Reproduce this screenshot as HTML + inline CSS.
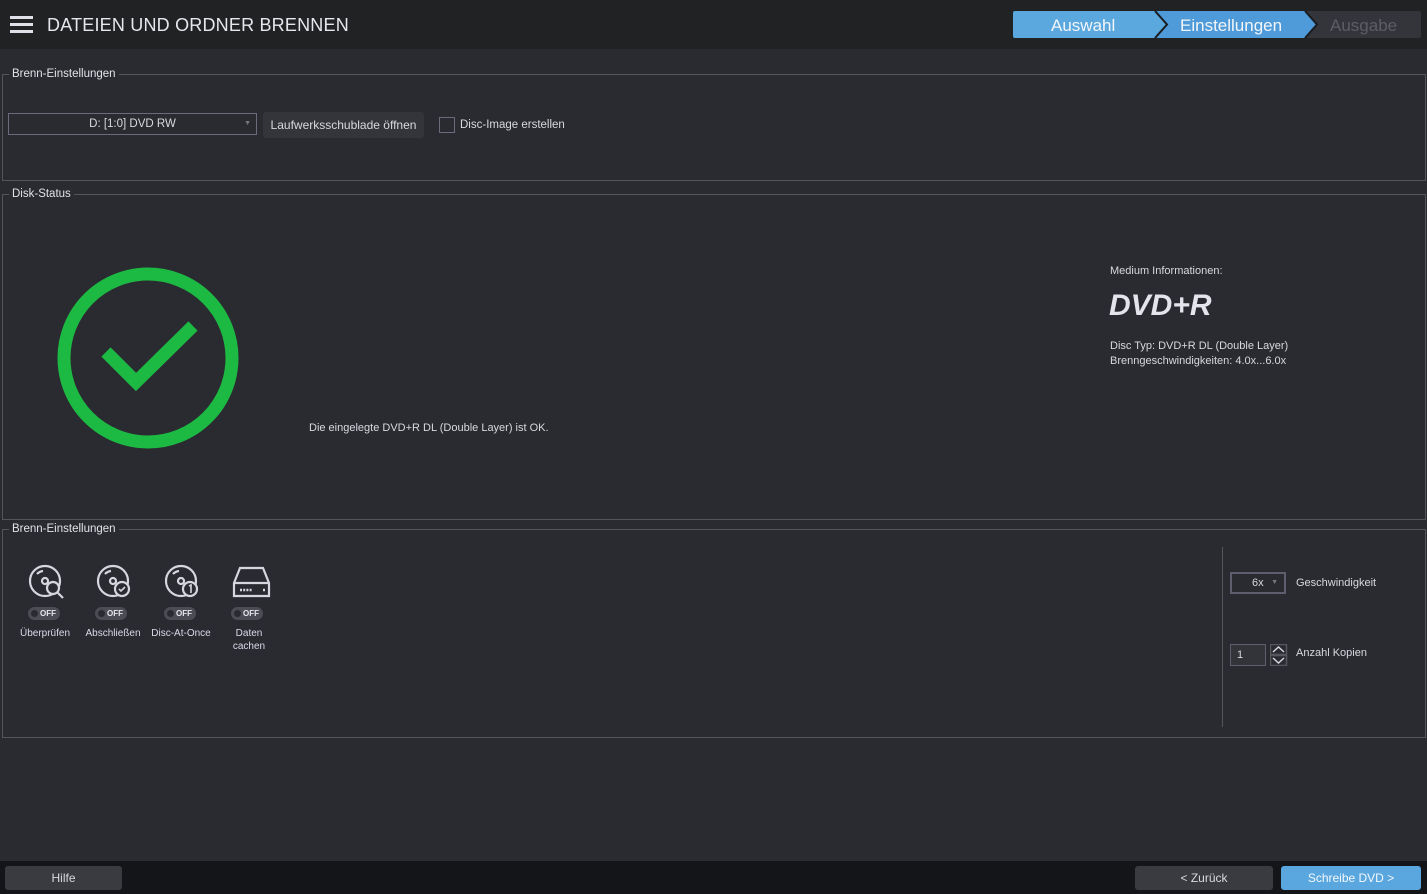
<!DOCTYPE html>
<html><head><meta charset="utf-8">
<style>
*{box-sizing:border-box;margin:0;padding:0}
body{width:1427px;height:894px;background:#2a2b31;font-family:"Liberation Sans",sans-serif;color:#d8d8de;position:relative;overflow:hidden;font-size:12px}
.hdr{position:absolute;left:0;top:0;width:1427px;height:49px;background:#212224}
.ham{position:absolute;left:10px;width:23px;height:3px;background:#e0e0ea}
.title{position:absolute;left:47px;top:15px;font-size:18px;color:#e6e6ee;letter-spacing:0.2px}
.box{position:absolute;left:2px;width:1424px;border:1px solid #54555b}
.lg{position:absolute;left:6px;top:-7px;background:#2a2b31;padding:0 3px;font-size:11.5px;color:#e2e2e8}
.t{position:absolute;white-space:nowrap}
.btn{position:absolute;border-radius:3px;text-align:center;font-size:12px}
.tog{position:absolute;width:32px;height:13px;border-radius:7px;background:#4b4c54;font-size:8px;font-weight:bold;color:#e6e6ee;line-height:13px;padding-left:12px;white-space:nowrap}
.tog:before{content:"";position:absolute;left:3px;top:3px;width:7px;height:7px;border-radius:50%;background:#2a2b31}
.lbl{position:absolute;font-size:10px;color:#d8dae8;text-align:center;width:70px;line-height:13px}
</style></head><body>
<div class="hdr">
 <div class="ham" style="top:16px"></div><div class="ham" style="top:23px"></div><div class="ham" style="top:30px"></div>
 <div class="title">DATEIEN UND ORDNER BRENNEN</div>
 <svg style="position:absolute;left:1013px;top:11px" width="408" height="27">
  <path d="M0 2 Q0 0 2 0 H142 L154 13.5 L142 27 H2 Q0 27 0 25Z" fill="#5aa8de"/>
  <path d="M143 0 H292 L304 13.5 L292 27 H143 L155 13.5Z" fill="#4f9ad8"/>
  <path d="M142 0 L154 13.5 L142 27" stroke="#1b1c20" stroke-width="2" fill="none"/>
  <path d="M293 0 H406 Q408 0 408 2 V25 Q408 27 406 27 H293 L305 13.5Z" fill="#34353b"/>
  <path d="M292 0 L304 13.5 L292 27" stroke="#1b1c20" stroke-width="2" fill="none"/>
  <text x="38" y="20" font-family="Liberation Sans" font-size="17" fill="#f2f6fa">Auswahl</text>
  <text x="167" y="20" font-family="Liberation Sans" font-size="17" fill="#f2f6fa">Einstellungen</text>
  <text x="317" y="20" font-family="Liberation Sans" font-size="17" fill="#5c5d66">Ausgabe</text>
 </svg>
</div>

<div class="box" style="top:74px;height:107px"><div class="lg">Brenn-Einstellungen</div></div>
<div class="t" style="left:8px;top:113px;width:249px;height:22px;border:1px solid #6a6b7c;text-align:center;line-height:20px;font-size:11.5px">D: [1:0] DVD RW<span style="position:absolute;right:5px;top:0;font-size:7px;color:#777">▼</span></div>
<div class="btn" style="left:263px;top:112px;width:161px;height:26px;background:#34353b;line-height:26px">Laufwerksschublade öffnen</div>
<div class="t" style="left:439px;top:117px;width:16px;height:16px;border:1px solid #6a6b7c"></div>
<div class="t" style="left:460px;top:119px;font-size:11.5px">Disc-Image erstellen</div>

<div class="box" style="top:194px;height:326px"><div class="lg">Disk-Status</div></div>
<svg style="position:absolute;left:56px;top:266px" width="184" height="184">
 <circle cx="92" cy="92" r="84" stroke="#1dba43" stroke-width="13" fill="none"/>
 <path d="M50 86 L80 116 L137 60" stroke="#1dba43" stroke-width="13" fill="none"/>
</svg>
<div class="t" style="left:309px;top:422px;font-size:11px">Die eingelegte DVD+R DL (Double Layer) ist OK.</div>
<div class="t" style="left:1110px;top:265px;font-size:11px">Medium Informationen:</div>
<div class="t" style="left:1109px;top:289px;font-size:30px;font-weight:bold;font-style:italic;color:#e4e4ec">DVD+R</div>
<div class="t" style="left:1110px;top:340px;font-size:11px">Disc Typ: DVD+R DL (Double Layer)</div>
<div class="t" style="left:1110px;top:355px;font-size:11px">Brenngeschwindigkeiten: 4.0x...6.0x</div>

<div class="box" style="top:529px;height:209px"><div class="lg">Brenn-Einstellungen</div></div>
<svg style="position:absolute;left:28px;top:563px" width="250" height="40" fill="none" stroke="#d6d6de" stroke-width="2.2">
 <g><circle cx="17" cy="18" r="15"/><circle cx="17" cy="18" r="3"/><path d="M9 11 a10 10 0 0 1 6 -3"/><circle cx="25" cy="25" r="6" fill="#2a2b31"/><path d="M29 29 L35 35"/></g>
 <g transform="translate(68,0)"><circle cx="17" cy="18" r="15"/><circle cx="17" cy="18" r="3"/><path d="M9 11 a10 10 0 0 1 6 -3"/><circle cx="26" cy="26" r="7" fill="#2a2b31"/><path d="M23 26 l2 2 l4 -4" stroke-width="1.6"/></g>
 <g transform="translate(136,0)"><circle cx="17" cy="18" r="15"/><circle cx="17" cy="18" r="3"/><path d="M9 11 a10 10 0 0 1 6 -3"/><circle cx="26" cy="26" r="7" fill="#2a2b31"/><path d="M25 23 l2 -1 v8" stroke-width="1.6"/></g>
 <g transform="translate(202,0)"><path d="M4 20 L10 5 H33 L39 20 V33 H4Z M4 20 H39"/><path d="M10 27 h12 M33 27 h2" stroke-width="2.5" stroke-dasharray="2 1.2"/></g>
</svg>
<div class="tog" style="left:28px;top:607px">OFF</div>
<div class="tog" style="left:95px;top:607px">OFF</div>
<div class="tog" style="left:164px;top:607px">OFF</div>
<div class="tog" style="left:231px;top:607px">OFF</div>
<div class="lbl" style="left:10px;top:627px">Überprüfen</div>
<div class="lbl" style="left:78px;top:627px">Abschließen</div>
<div class="lbl" style="left:146px;top:627px">Disc-At-Once</div>
<div class="lbl" style="left:214px;top:627px">Daten<br>cachen</div>

<div class="t" style="left:1222px;top:547px;width:1px;height:180px;background:#54555b"></div>
<div class="t" style="left:1230px;top:572px;width:56px;height:22px;border:2px solid #5d5e6e;font-size:11px;line-height:18px;padding-left:20px">6x<span style="position:absolute;right:6px;font-size:7px;color:#777">▼</span></div>
<div class="t" style="left:1296px;top:577px;font-size:11px">Geschwindigkeit</div>
<div class="t" style="left:1230px;top:644px;width:36px;height:22px;border:1px solid #5d5e6e;background:#33343a;font-size:11px;line-height:20px;padding-left:6px">1</div>
<svg style="position:absolute;left:1270px;top:644px" width="18" height="22" fill="none" stroke="#d6d6de" stroke-width="1.5">
 <rect x="0.5" y="0.5" width="16" height="10" stroke="#55565e"/><rect x="0.5" y="11.5" width="16" height="10" stroke="#55565e"/>
 <path d="M3 8 L8.5 3 L14 8 M3 14 L8.5 19 L14 14"/>
</svg>
<div class="t" style="left:1296px;top:647px;font-size:11px">Anzahl Kopien</div>

<div class="t" style="left:0;top:861px;width:1427px;height:33px;background:#141519"></div>
<div class="btn" style="left:5px;top:866px;width:117px;height:24px;background:#3a3b40;line-height:24px">Hilfe</div>
<div class="btn" style="left:1135px;top:866px;width:138px;height:24px;background:#3a3b40;line-height:24px">&lt; Zurück</div>
<div class="btn" style="left:1281px;top:866px;width:140px;height:24px;background:#5aa6de;line-height:24px;color:#f4f8fc">Schreibe DVD &gt;</div>
</body></html>
